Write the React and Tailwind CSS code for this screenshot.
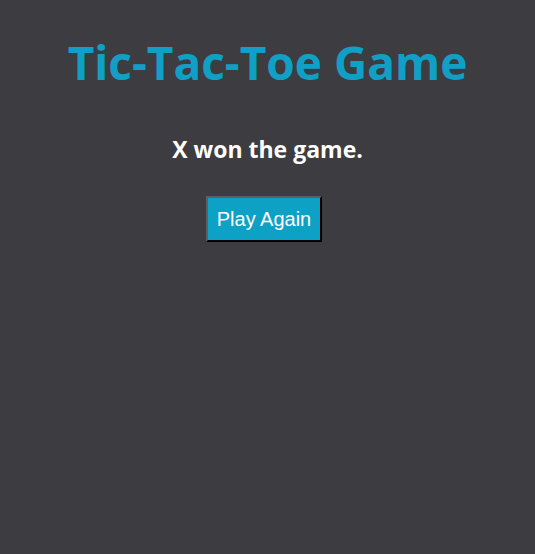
export default function App() {
  return (
    <div className="min-h-[554px] w-full bg-[#3d3c41] text-center font-['Open_Sans',sans-serif]">
      <h1 className="pt-[30px] text-[46px] font-bold leading-[64px] text-[#10a0c6]">
        Tic-Tac-Toe Game
      </h1>
      <p className="mt-[40px] text-[23px] font-bold leading-[30px] text-white">
        X won the game.
      </p>
      <button className="mt-[32px] mr-[7px] border-2 border-t-[#5f5e62] border-l-[#5f5e62] border-r-black border-b-black bg-[#0ea1c6] px-[9px] py-[6px] font-['Liberation_Sans',sans-serif] text-[20px] leading-[30px] text-white">
        Play Again
      </button>
    </div>
  );
}
